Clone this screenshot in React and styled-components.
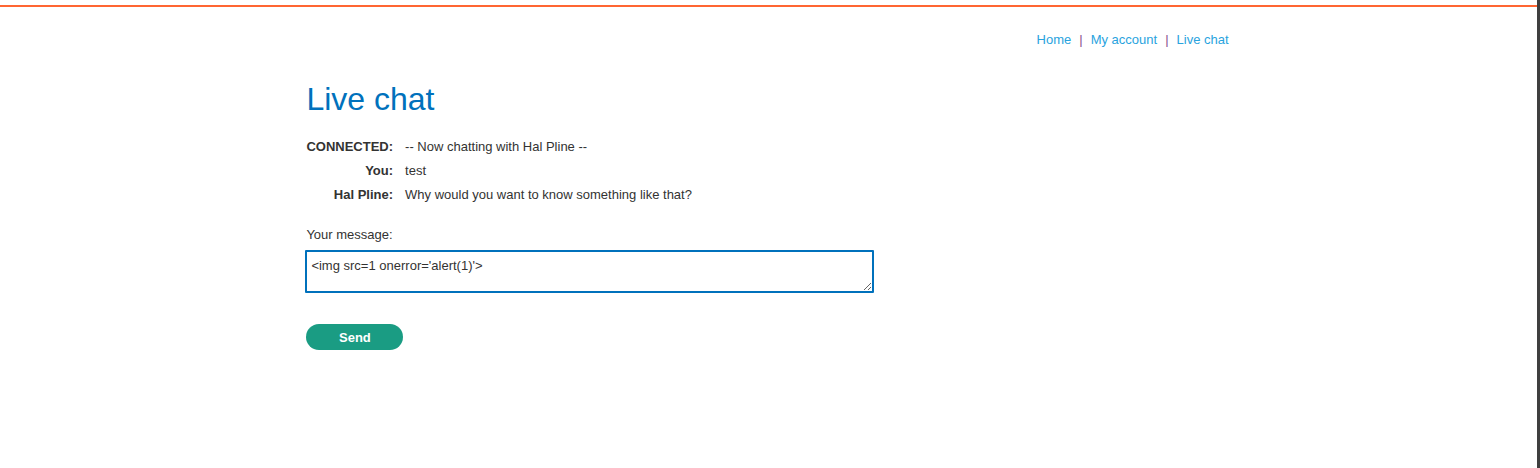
import React from "react";
import styled, { createGlobalStyle } from "styled-components";

const Global = createGlobalStyle`
  html, body { margin: 0; padding: 0; background: #fff; }
  body { font-family: "Liberation Sans", Arial, sans-serif; font-size: 13px; color: #333332; }
`;

const Page = styled.div`
  display: flex;
  min-height: 468px;
`;

const Main = styled.div`
  flex: 1;
  display: flex;
  flex-direction: column;
`;

const Scrollbar = styled.div`
  width: 3px;
  background: #3f3f3f;
`;

const TopBar = styled.div`
  margin-top: 5px;
  height: 2px;
  background: #ff6633;
`;

const Container = styled.div`
  width: 60%;
  margin: 0 calc(20% + 1px) 0 calc(20% - 1px);
`;

const Nav = styled.nav`
  display: flex;
  justify-content: flex-end;
  align-items: center;
  gap: 8px;
  padding-top: 25px;
  font-size: 13px;
  line-height: 16px;
`;

const NavLink = styled.a`
  color: #29a3de;
  text-decoration: none;
`;

const Sep = styled.span`
  color: #8a4f8e;
`;

const Title = styled.h1`
  margin: 31px 0 0;
  font-size: 32px;
  font-weight: 400;
  line-height: 40px;
  color: #0071bc;
`;

const ChatTable = styled.div`
  display: grid;
  grid-template-columns: auto 1fr;
  column-gap: 12px;
  row-gap: 9px;
  margin-top: 20px;
  line-height: 15px;
`;

const Label = styled.div`
  font-weight: 700;
  text-align: right;
  color: #333332;
`;

const Value = styled.div`
  color: #333332;
`;

const MessageLabel = styled.div`
  margin-top: 25px;
  line-height: 15px;
`;

const TextArea = styled.textarea`
  display: block;
  box-sizing: border-box;
  margin-top: 8px;
  margin-left: -1px;
  width: 569px;
  height: 43px;
  padding: 6px 4px;
  border: 2px solid #0071bc;
  border-radius: 1px;
  outline: none;
  font-family: "Liberation Sans", Arial, sans-serif;
  font-size: 13px;
  line-height: 15px;
  color: #333332;
  resize: both;
`;

const SendButton = styled.button`
  margin-top: 31px;
  width: 97px;
  height: 26px;
  border: none;
  border-radius: 13px;
  background: #1a9c83;
  color: #fff;
  font-family: "Liberation Sans", Arial, sans-serif;
  font-weight: 700;
  font-size: 13px;
  cursor: pointer;
`;

export default function App() {
  const rows = [
    ["CONNECTED:", "-- Now chatting with Hal Pline --"],
    ["You:", "test"],
    ["Hal Pline:", "Why would you want to know something like that?"],
  ];
  return (
    <>
      <Global />
      <Page>
        <Main>
          <TopBar />
          <Container>
            <Nav>
              <NavLink href="#">Home</NavLink>
              <Sep>|</Sep>
              <NavLink href="#">My account</NavLink>
              <Sep>|</Sep>
              <NavLink href="#">Live chat</NavLink>
            </Nav>
            <Title>Live chat</Title>
            <ChatTable>
              {rows.map(([l, v]) => (
                <React.Fragment key={l}>
                  <Label>{l}</Label>
                  <Value>{v}</Value>
                </React.Fragment>
              ))}
            </ChatTable>
            <MessageLabel>Your message:</MessageLabel>
            <TextArea defaultValue="<img src=1 onerror='alert(1)'>" spellCheck={false} />
            <SendButton>Send</SendButton>
          </Container>
        </Main>
        <Scrollbar />
      </Page>
    </>
  );
}
